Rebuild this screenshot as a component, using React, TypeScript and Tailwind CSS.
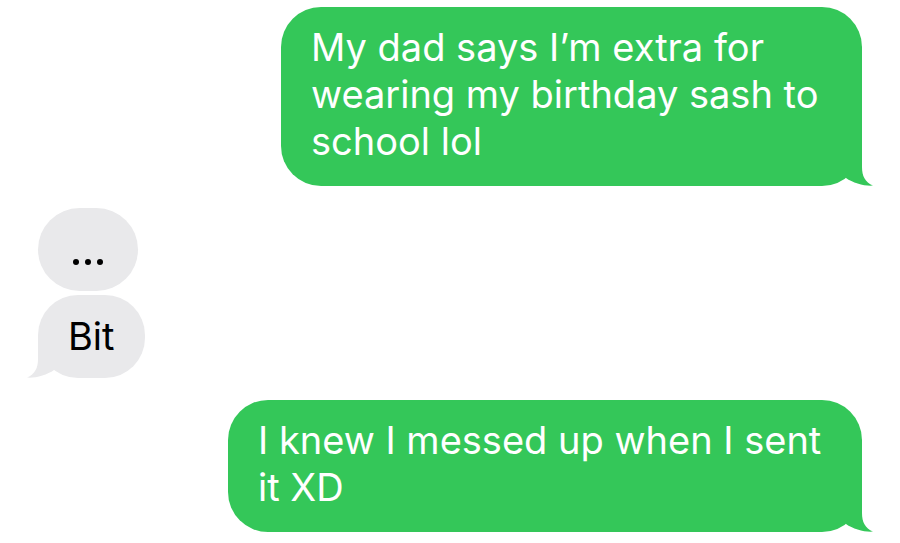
import React from 'react';

const GREEN = '#34C759';
const GRAY = '#E9E9EB';

// iMessage-style tail, fills the bottom corner and curls out to a tip
const TailRight = ({ color }: { color: string }) => (
  <svg
    className="absolute bottom-0 right-[-15px]"
    width="50"
    height="44"
    viewBox="0 0 50 44"
    fill={color}
  >
    <path d="M19 4 L35 4 L35 25 C35 34 38 40 46 43.6 C38 44.4 26 41 19 36 Z" />
  </svg>
);

const TailLeft = ({ color }: { color: string }) => (
  <svg
    className="absolute bottom-0 left-[-15px]"
    width="50"
    height="44"
    viewBox="0 0 50 44"
    fill={color}
  >
    <path d="M31 4 L15 4 L15 25 C15 34 12 40 4 43.6 C12 44.4 24 41 31 36 Z" />
  </svg>
);

const SentBubble = ({ lines, width }: { lines: string[]; width: string }) => (
  <div className={`relative self-end ${width}`}>
    <div className="rounded-[40px] bg-[#34C759] px-[30px] pt-[17px] pb-[21px] text-[38px] leading-[47px] text-white whitespace-nowrap">
      {lines.map((l, i) => (
        <div key={i}>{l}</div>
      ))}
    </div>
    <TailRight color={GREEN} />
  </div>
);

export default function App() {
  return (
    <div
      className="flex h-[543px] w-full flex-col bg-white px-[38px] pt-[7px]"
      style={{ fontFamily: 'Inter, "Liberation Sans", sans-serif' }}
    >
      <SentBubble
        width="w-[581px]"
        lines={['My dad says I’m extra for', 'wearing my birthday sash to', 'school lol']}
      />

      {/* typing dots bubble */}
      <div className="mt-[22px] flex h-[83px] w-[100px] items-center justify-center gap-[6px] rounded-[42px] bg-[#E9E9EB] pt-[24px]">
        <span className="h-[6px] w-[6px] rounded-full bg-black" />
        <span className="h-[6px] w-[6px] rounded-full bg-black" />
        <span className="h-[6px] w-[6px] rounded-full bg-black" />
      </div>

      <div className="relative mt-[4px] w-[107px]">
        <div className="rounded-[40px] bg-[#E9E9EB] px-[30px] py-[18px] text-[38px] leading-[47px] text-black">
          Bit
        </div>
        <TailLeft color={GRAY} />
      </div>

      <div className="mt-[22px] flex flex-col">
        <SentBubble
          width="w-[634px]"
          lines={['I knew I messed up when I sent', 'it XD']}
        />
      </div>
    </div>
  );
}
